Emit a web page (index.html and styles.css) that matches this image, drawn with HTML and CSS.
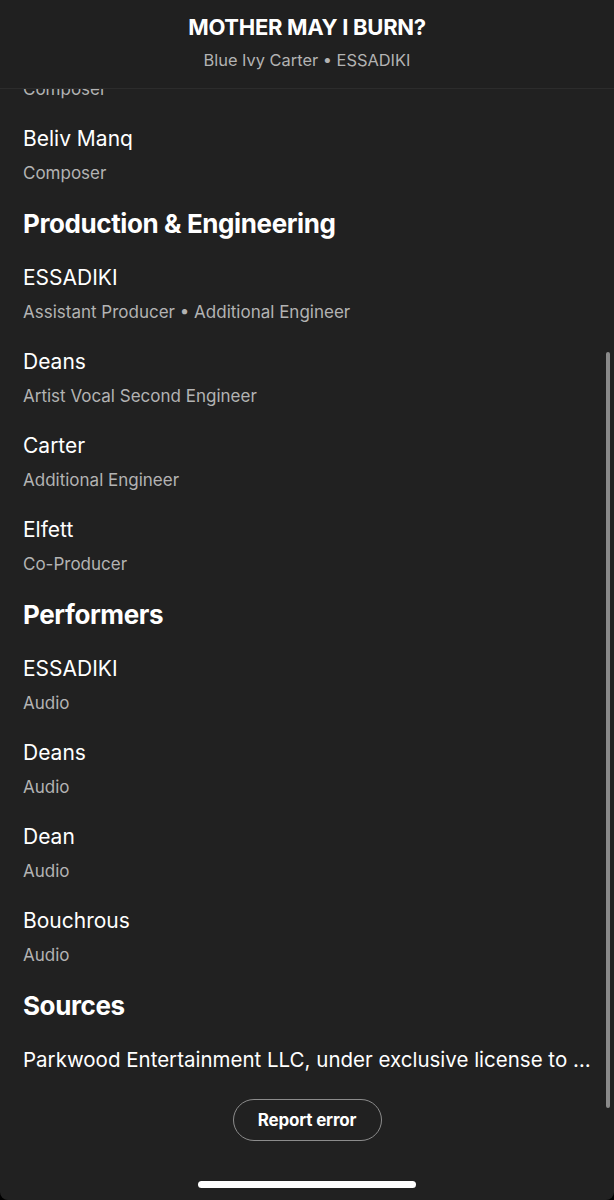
FILE: index.html
```html
<!DOCTYPE html>
<html lang="en">

<head>
  <meta charset="UTF-8">
  <meta name="viewport" content="width=device-width, initial-scale=1.0">
  <title>Credits</title>
  <link rel="stylesheet" href="styles.css">
</head>

<body>
  <div class="screen">
    <header class="top">
      <div class="track">MOTHER MAY I BURN?</div>
      <div class="artists">Blue Ivy Carter • ESSADIKI</div>
    </header>

    <main class="scroller">
      <div class="list">
        <div class="role cut">Composer</div>

        <div class="item">
          <div class="name">Beliv Manq</div>
          <div class="role">Composer</div>
        </div>

        <h2 class="heading">Production &amp; Engineering</h2>
        <div class="item">
          <div class="name">ESSADIKI</div>
          <div class="role">Assistant Producer • Additional Engineer</div>
        </div>
        <div class="item">
          <div class="name">Deans</div>
          <div class="role">Artist Vocal Second Engineer</div>
        </div>
        <div class="item">
          <div class="name">Carter</div>
          <div class="role">Additional Engineer</div>
        </div>
        <div class="item">
          <div class="name">Elfett</div>
          <div class="role">Co-Producer</div>
        </div>

        <h2 class="heading">Performers</h2>
        <div class="item">
          <div class="name">ESSADIKI</div>
          <div class="role">Audio</div>
        </div>
        <div class="item">
          <div class="name">Deans</div>
          <div class="role">Audio</div>
        </div>
        <div class="item">
          <div class="name">Dean</div>
          <div class="role">Audio</div>
        </div>
        <div class="item">
          <div class="name">Bouchrous</div>
          <div class="role">Audio</div>
        </div>

        <h2 class="heading">Sources</h2>
        <div class="source">Parkwood Entertainment LLC, under exclusive license to Columbia Records, a Division of Sony Music Entertainment</div>

        <div class="actions">
          <button class="report">Report error</button>
        </div>
      </div>
      <div class="scrollbar"></div>
    </main>

    <div class="home-bar"></div>
  </div>
</body>

</html>
```

FILE: styles.css
```css
body {
  margin: 0;
  padding: 0;
  background-color: #000;
  font-family: "Inter", "Noto Sans", sans-serif;
}

.screen {
  position: relative;
  width: 614px;
  height: 1200px;
  background-color: #212121;
  border-radius: 0 0 8px 8px;
  overflow: hidden;
  display: flex;
  flex-direction: column;
}

.top {
  height: 89px;
  box-sizing: border-box;
  padding-top: 14px;
  border-bottom: 1px solid #2c2c2c;
  background-color: #202020;
  text-align: center;
  position: relative;
  z-index: 2;
}

.track {
  color: #fff;
  font-size: 22px;
  font-weight: 700;
  line-height: 26px;
  letter-spacing: -0.3px;
}

.artists {
  margin-top: 9px;
  color: #b3b3b3;
  font-size: 16.4px;
  line-height: 22px;
}

.scroller {
  position: relative;
  flex: 1;
  overflow: hidden;
}

.list {
  padding: 0 23px;
  margin-top: -11px;
}

.item {
  margin-top: 26px;
}

.name {
  color: #fff;
  font-size: 21px;
  line-height: 26px;
}

.role {
  margin-top: 10px;
  color: #b3b3b3;
  font-size: 17px;
  line-height: 22px;
}

.role.cut {
  margin-top: 0;
}

.heading {
  margin: 24px 0 -1px 0;
  color: #fff;
  font-size: 26px;
  font-weight: 700;
  line-height: 32px;
  letter-spacing: -0.4px;
}

.source {
  margin-top: 26px;
  color: #fff;
  font-size: 20.5px;
  line-height: 26px;
  white-space: nowrap;
  overflow: hidden;
  text-overflow: ellipsis;
}

.actions {
  margin-top: 26px;
  display: flex;
  justify-content: center;
}

.report {
  width: 149px;
  height: 42px;
  border: 1px solid #8c8c8c;
  border-radius: 21px;
  background: transparent;
  color: #fff;
  font-family: inherit;
  font-size: 17px;
  font-weight: 700;
  letter-spacing: -0.2px;
}

/* overlay scroll indicator */
.scrollbar {
  position: absolute;
  right: 4px;
  top: 263px;
  width: 4px;
  height: 756px;
  border-radius: 2px;
  background-color: #8a8a8a;
}

.home-bar {
  position: absolute;
  left: 198px;
  bottom: 12px;
  width: 218px;
  height: 7px;
  border-radius: 4px;
  background-color: #fff;
}
```
